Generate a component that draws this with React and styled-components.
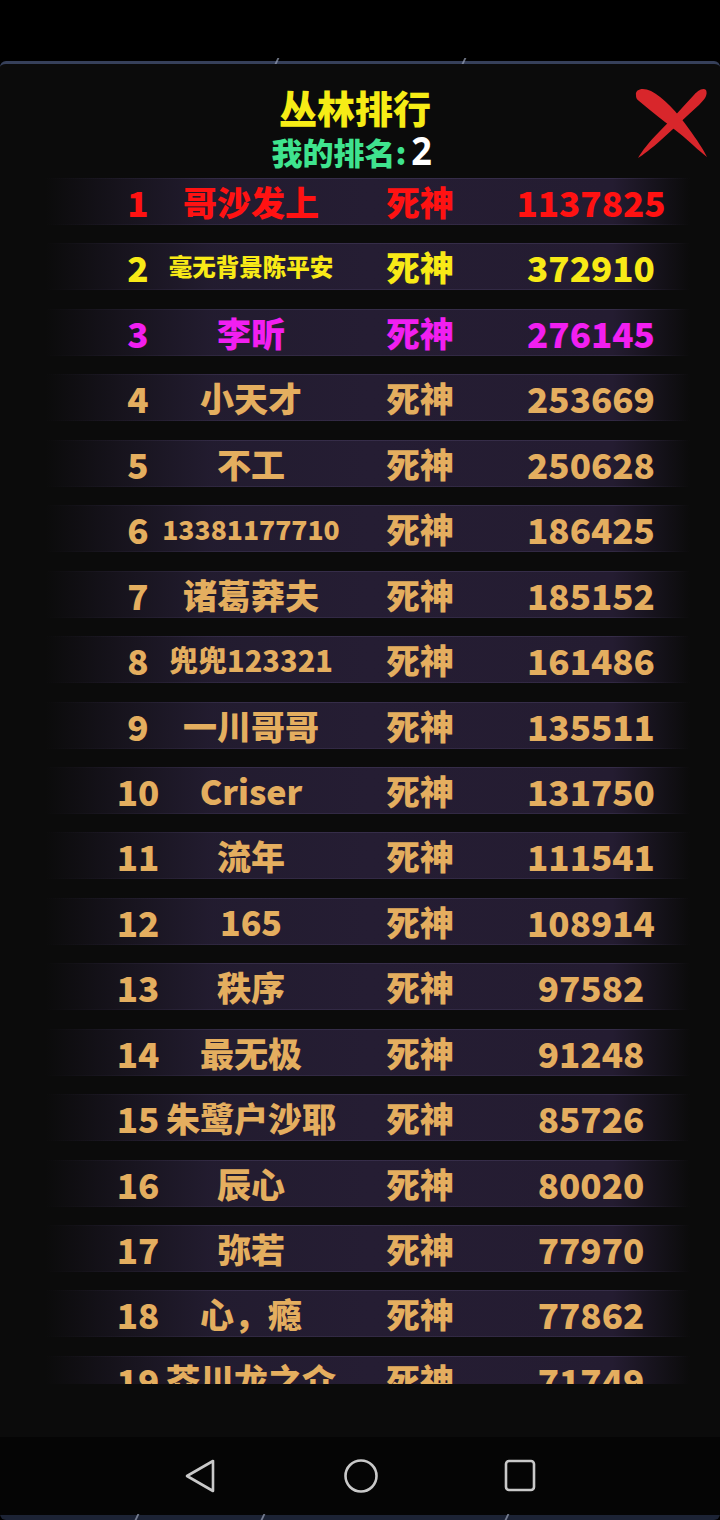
import React from "react";
import styled, { createGlobalStyle } from "styled-components";

const GlobalStyle = createGlobalStyle`
  html, body { margin: 0; padding: 0; background: #000; }
  body { font-family: "Noto Sans CJK SC", "Noto Sans", sans-serif; }
`;

const Screen = styled.div`
  width: 720px;
  height: 1520px;
  display: flex;
  flex-direction: column;
  background: #000;
  overflow: hidden;
`;

const StatusBar = styled.div`
  height: 61px;
  flex: none;
  background: #000;
`;

const Panel = styled.div`
  flex: 1;
  display: flex;
  flex-direction: column;
  background: #0b0b0b;
  border-top: 3px solid #36405a;
  border-bottom: 5px solid #1c2335;
  border-radius: 6px;
  position: relative;
`;

const Tick = styled.span`
  position: absolute;
  ${(p) => (p.$bottom ? "bottom: -5px;" : "top: -6px;")}
  left: ${(p) => p.$x}px;
  width: 2px;
  height: 6px;
  background: #9aa3b8;
  transform: skewX(-25deg);
  opacity: 0.7;
`;

const Header = styled.div`
  position: relative;
  padding-top: 20px;
  display: flex;
  flex-direction: column;
  align-items: center;
  font-weight: 900;
`;

const Title = styled.div`
  height: 46px;
  line-height: 46px;
  font-size: 38px;
  color: #f6ec16;
  margin-right: 10px;
`;

const Sub = styled.div`
  height: 40px;
  line-height: 40px;
  font-size: 31px;
  color: #3fe38e;
  display: flex;
  align-items: baseline;
  margin-right: 16px;
`;

const MyRank = styled.span`
  color: #ffffff;
  font-size: 40px;
  line-height: 40px;
  font-family: "Noto Sans", sans-serif;
  font-weight: 700;
  margin-left: 3px;
  transform: scaleX(0.9);
`;

const CloseBtn = styled.div`
  position: absolute;
  right: 11px;
  top: 21px;
  width: 76px;
  height: 74px;
`;

const List = styled.div`
  height: 1214px;
  flex: none;
  overflow: hidden;
  padding-top: 8px;
  box-sizing: border-box;
  display: flex;
  flex-direction: column;
  gap: 18.45px;
`;

const fadeLine = (a) =>
  `linear-gradient(90deg, rgba(70,60,95,0) 0%, rgba(70,60,95,${a * 0.4}) 15%, rgba(70,60,95,${a}) 30%, rgba(70,60,95,${a}) 88%, rgba(70,60,95,0) 100%)`;

const Row = styled.div`
  flex: none;
  height: 47px;
  margin-left: 45px;
  width: 645px;
  display: grid;
  grid-template-columns: 60px 166px 172px 170px;
  padding-left: 63px;
  box-sizing: border-box;
  align-items: center;
  background: ${fadeLine(0.5)} top / 100% 1px no-repeat,
    ${fadeLine(0.4)} bottom / 100% 1px no-repeat,
    linear-gradient(
      90deg,
      rgba(35, 28, 47, 0) 0%,
      rgba(35, 28, 47, 0.5) 12%,
      rgba(36, 29, 50, 0.93) 26%,
      #251d33 50%,
      #241c31 88%,
      rgba(35, 28, 47, 0) 100%
    );
  color: ${(p) => p.$color};
  font-weight: 900;
  white-space: nowrap;
`;

const Cell = styled.div`
  justify-self: center;
  font-size: ${(p) => p.$size || 35}px;
  line-height: 47px;
`;

const Spacer = styled.div`
  flex: 1;
`;

const NavBar = styled.div`
  height: 78px;
  flex: none;
  background: #050505;
  display: flex;
  align-items: center;
  justify-content: space-between;
  padding: 0 182px 0 183px;
  box-sizing: border-box;
`;

const NavIcon = styled.svg`
  width: 36px;
  height: 36px;
  display: block;
`;

const rows = [
  ["1", "哥沙发上", "1137825", "#ff1212"],
  ["2", "毫无背景陈平安", "372910", "#f8ea17", 23.5],
  ["3", "李昕", "276145", "#f11ff0"],
  ["4", "小天才", "253669"],
  ["5", "不工", "250628"],
  ["6", "13381177710", "186425", null, 26.5],
  ["7", "诸葛莽夫", "185152"],
  ["8", "兜兜123321", "161486", null, 29],
  ["9", "一川哥哥", "135511"],
  ["10", "Criser", "131750"],
  ["11", "流年", "111541"],
  ["12", "165", "108914"],
  ["13", "秩序", "97582"],
  ["14", "最无极", "91248"],
  ["15", "朱鹭户沙耶", "85726"],
  ["16", "辰心", "80020"],
  ["17", "弥若", "77970"],
  ["18", "心，瘾", "77862"],
  ["19", "芥川龙之介", "71749"],
];

export default function App() {
  return (
    <Screen>
      <GlobalStyle />
      <StatusBar />
      <Panel>
        <Tick $x={276} />
        <Tick $x={463} />
        <Tick $x={136} $bottom />
        <Tick $x={262} $bottom />
        <Tick $x={506} $bottom />
        <Header>
          <Title>丛林排行</Title>
          <Sub>
            我的排名:<MyRank>2</MyRank>
          </Sub>
          <CloseBtn>
            <svg viewBox="0 0 76 74" width="76" height="74">
              <path
                d="M3 10 C2 4 10 2 18 6 C30 12 45 28 56 44 C64 55 70 64 74 72 C66 66 56 56 46 48 C32 37 18 26 6 16 C3 14 3 12 3 10 Z"
                fill="#d8262b"
              />
              <path
                d="M73 5 C75 10 72 14 66 20 C54 31 40 44 28 55 C18 64 10 70 5 73 C9 66 16 57 26 47 C38 35 50 22 60 11 C64 6 70 2 73 5 Z"
                fill="#d8262b"
              />
            </svg>
          </CloseBtn>
        </Header>
        <List>
          {rows.map(([rank, name, score, color, nameSize]) => (
            <Row key={rank} $color={color || "#e4ae5f"}>
              <Cell>{rank}</Cell>
              <Cell $size={nameSize || 34}>{name}</Cell>
              <Cell $size={34}>死神</Cell>
              <Cell>{score}</Cell>
            </Row>
          ))}
        </List>
        <Spacer />
        <NavBar>
          <NavIcon viewBox="0 0 36 36">
            <path
              d="M30 3 L30 33 L4 18 Z"
              fill="none"
              stroke="#c9c9c9"
              strokeWidth="2.6"
              strokeLinejoin="round"
            />
          </NavIcon>
          <NavIcon viewBox="0 0 36 36">
            <ellipse cx="18" cy="18" rx="15.5" ry="15.5" fill="none" stroke="#c9c9c9" strokeWidth="2.6" />
          </NavIcon>
          <NavIcon viewBox="0 0 36 36">
            <rect x="4" y="3" width="28" height="29" rx="3" fill="none" stroke="#c9c9c9" strokeWidth="2.6" />
          </NavIcon>
        </NavBar>
      </Panel>
    </Screen>
  );
}
